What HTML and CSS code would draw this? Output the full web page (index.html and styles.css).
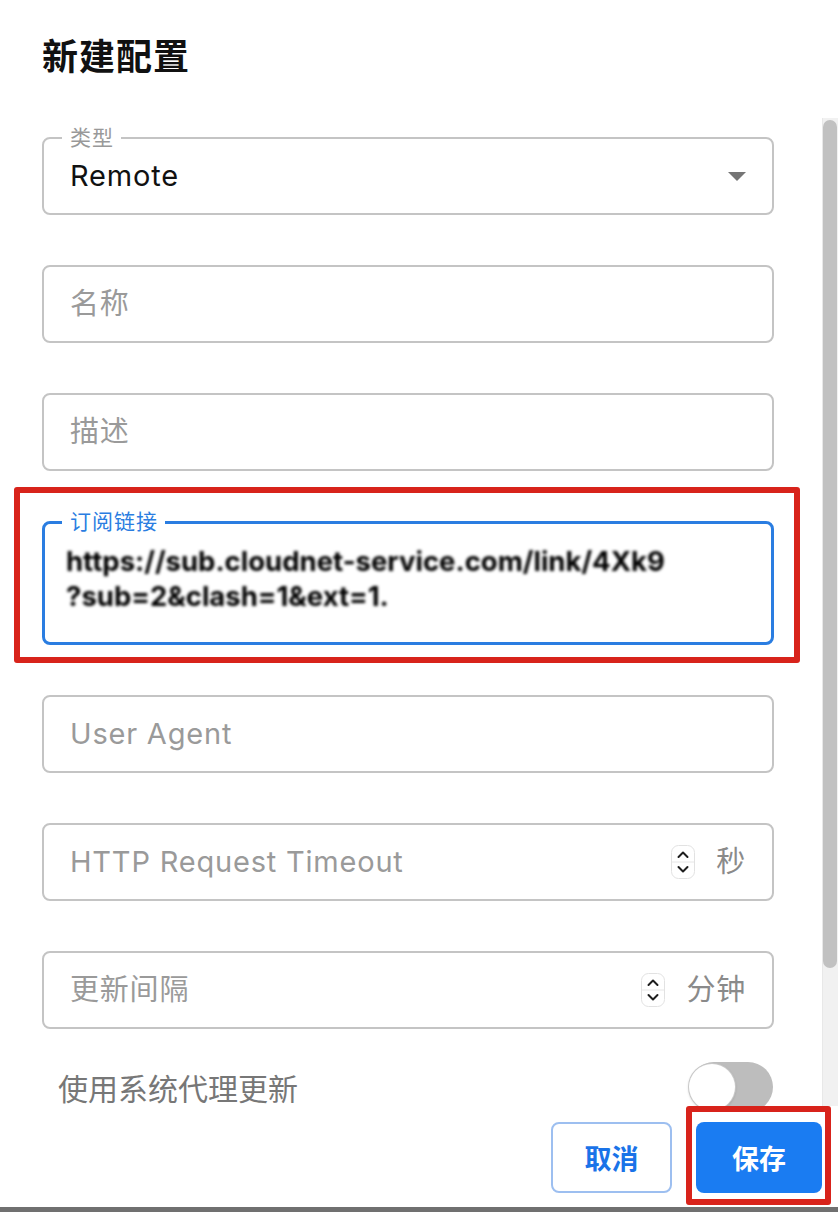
FILE: index.html
```html
<!DOCTYPE html>
<html lang="zh-CN">
<head>
<meta charset="utf-8">
<title>新建配置</title>
<link rel="stylesheet" href="styles.css">
</head>
<body>
<div class="page">
  <h1 class="title">新建配置</h1>
  <div class="content">
    <div class="form">
      <div class="field field-select">
        <span class="label">类型</span>
        <span class="value">Remote</span>
        <span class="arrow"></span>
      </div>
      <div class="field"><span class="placeholder">名称</span></div>
      <div class="field"><span class="placeholder">描述</span></div>
      <div class="field field-focused">
        <span class="label label-focused">订阅链接</span>
        <div class="url">
          <div class="url-line">https://sub.cloudnet-service.com/link/4Xk9</div>
          <div class="url-line">?sub=2&amp;clash=1&amp;ext=1.</div>
        </div>
      </div>
      <div class="field"><span class="placeholder">User Agent</span></div>
      <div class="field field-adorned">
        <span class="placeholder">HTTP Request Timeout</span>
        <span class="adorn">
          <svg class="spin" width="24" height="34" viewBox="0 0 24 34">
            <rect x="0.5" y="0.5" width="23" height="33" rx="7" fill="#fff" stroke="#e2e2e2"/>
            <line x1="1" y1="17" x2="23" y2="17" stroke="#e6e6e6" stroke-width="1"/>
            <path d="M7.5 12 L12 7.5 L16.5 12" fill="none" stroke="#1e1e1e" stroke-width="2" stroke-linecap="round" stroke-linejoin="round"/>
            <path d="M7.5 22 L12 26.5 L16.5 22" fill="none" stroke="#1e1e1e" stroke-width="2" stroke-linecap="round" stroke-linejoin="round"/>
          </svg>
          <span class="unit">秒</span>
        </span>
      </div>
      <div class="field field-adorned">
        <span class="placeholder">更新间隔</span>
        <span class="adorn">
          <svg class="spin" width="24" height="34" viewBox="0 0 24 34">
            <rect x="0.5" y="0.5" width="23" height="33" rx="7" fill="#fff" stroke="#e2e2e2"/>
            <line x1="1" y1="17" x2="23" y2="17" stroke="#e6e6e6" stroke-width="1"/>
            <path d="M7.5 12 L12 7.5 L16.5 12" fill="none" stroke="#1e1e1e" stroke-width="2" stroke-linecap="round" stroke-linejoin="round"/>
            <path d="M7.5 22 L12 26.5 L16.5 22" fill="none" stroke="#1e1e1e" stroke-width="2" stroke-linecap="round" stroke-linejoin="round"/>
          </svg>
          <span class="unit">分钟</span>
        </span>
      </div>
      <div class="switch-row">
        <span class="switch-label">使用系统代理更新</span>
        <span class="switch"><span class="switch-thumb"></span></span>
      </div>
    </div>
    <div class="scrollbar"><div class="scroll-thumb"></div></div>
  </div>
  <div class="actions">
    <button class="btn btn-outline">取消</button>
    <button class="btn btn-primary">保存</button>
  </div>
  <div class="edge"></div>
  <div class="mark mark-url"></div>
  <div class="mark mark-save"></div>
</div>
</body>
</html>
```
FILE: styles.css
```css
html, body {
  margin: 0;
  padding: 0;
  background: #fff;
}
body {
  font-family: Inter, "Noto Sans CJK SC", sans-serif;
  color: #111;
}
.page {
  position: relative;
  width: 838px;
  height: 1212px;
  overflow: hidden;
  display: flex;
  flex-direction: column;
}
.title {
  margin: 0;
  padding: 32px 0 36px 42px;
  font-size: 36px;
  letter-spacing: 1px;
  line-height: 50px;
  font-weight: 700;
  color: #111;
}
.content {
  display: flex;
  height: 988px;
  overflow: hidden;
  flex: none;
}
.form {
  margin-left: 42px;
  width: 732px;
  padding-top: 19px;
  flex: none;
}
.field {
  position: relative;
  box-sizing: border-box;
  height: 78px;
  border: 2px solid #c4c4c4;
  border-radius: 8px;
  display: flex;
  align-items: center;
  padding: 0 29px 0 26px;
  margin-bottom: 50px;
  font-size: 29px;
  letter-spacing: 0.8px;
  line-height: 34px;
}
.field-select {
  padding-right: 26px;
}
.field-adorned {
  padding-right: 26px;
}
.label {
  position: absolute;
  left: 18px;
  top: -12px;
  padding: 0 7px 0 8px;
  background: #fff;
  font-size: 21px;
  letter-spacing: 1px;
  line-height: 22px;
  color: #999;
}
.value {
  color: #111;
}
.arrow {
  margin-left: auto;
  width: 0;
  height: 0;
  border-left: 9px solid transparent;
  border-right: 9px solid transparent;
  border-top: 9px solid #757575;
}
.placeholder {
  color: #9a9a9a;
}
.field-focused {
  height: 124px;
  border: 3px solid #2a7de1;
  align-items: flex-start;
  padding: 20px 20px 0 21px;
  margin-bottom: 50px;
}
.label-focused {
  left: 17px;
  top: -13px;
  color: #2a7de1;
}
.url {
  filter: blur(1.4px);
  color: #000;
  font-weight: 700;
  font-size: 27.5px;
  letter-spacing: 0;
  line-height: 35px;
}
.url-line {
  white-space: nowrap;
}
.adorn {
  margin-left: auto;
  display: flex;
  align-items: center;
  gap: 21px;
}
.spin {
  display: block;
}
.unit {
  color: #8a8a8a;
}
.switch-row {
  display: flex;
  align-items: center;
  justify-content: space-between;
  height: 50px;
  margin-top: -17px;
  padding: 0 1px 0 16px;
}
.switch-label {
  font-size: 30px;
  color: #777;
}
.switch {
  box-sizing: border-box;
  width: 84px;
  height: 50px;
  border-radius: 25px;
  background: #bdbdbd;
  padding: 2px 0;
  display: flex;
}
.switch-thumb {
  width: 46px;
  height: 46px;
  border-radius: 50%;
  background: #fff;
  box-shadow: 0 0 0 1px #c8c8c8, 0 1px 3px rgba(0,0,0,0.25);
}
.scrollbar {
  margin-left: auto;
  box-sizing: border-box;
  width: 16px;
  background: #f1f1f1;
  border-left: 1px solid #e8e8e8;
  padding-top: 2px;
}
.scroll-thumb {
  width: 14px;
  height: 848px;
  border-radius: 7px;
  background: #c1c1c1;
}
.actions {
  box-sizing: border-box;
  height: 101px;
  display: flex;
  justify-content: flex-end;
  align-items: flex-start;
  gap: 24px;
  padding: 16px 16px 0 0;
  flex: none;
}
.btn {
  box-sizing: border-box;
  height: 71px;
  border-radius: 8px;
  font-family: Inter, "Noto Sans CJK SC", sans-serif;
  font-size: 27px;
  font-weight: 700;
  cursor: pointer;
}
.btn-outline {
  width: 121px;
  background: #fff;
  border: 2px solid #9dbff0;
  color: #1a73e8;
}
.btn-primary {
  width: 126px;
  background: #1a7cf2;
  border: none;
  color: #fff;
}
.edge {
  height: 5px;
  background: #707070;
  flex: none;
}
.mark {
  position: absolute;
  box-sizing: border-box;
  border: 6px solid #d8231b;
  border-radius: 3px;
  pointer-events: none;
}
.mark-url {
  left: 14px;
  top: 487px;
  width: 786px;
  height: 176px;
}
.mark-save {
  left: 686px;
  top: 1106px;
  width: 145px;
  height: 99px;
}
```
